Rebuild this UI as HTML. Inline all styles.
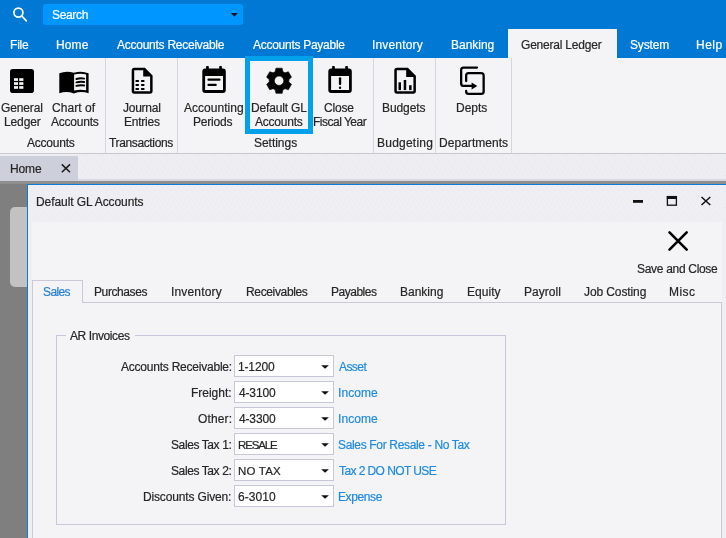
<!DOCTYPE html>
<html><head><meta charset="utf-8"><style>
html,body{margin:0;padding:0;width:726px;height:538px;overflow:hidden;background:#f4f4f6;position:relative;font-family:"Liberation Sans",sans-serif}
.a{position:absolute;box-sizing:border-box}
.t{position:absolute;white-space:pre;will-change:transform;-webkit-text-stroke:0.2px currentColor;font-size:12px;line-height:30px;height:30px;font-family:"Liberation Sans",sans-serif}
svg{position:absolute;overflow:visible}
</style></head><body>
<!-- header -->
<div class="a" style="left:0;top:0;width:726px;height:58px;background:#0078d4"></div>
<div class="a" style="left:43px;top:4px;width:200px;height:21px;background:#0096ff;border-radius:3px"></div>
<div class="a" style="left:508px;top:29px;width:109px;height:29px;background:#f4f4f6"></div>
<!-- ribbon -->
<div class="a" style="left:0;top:58px;width:726px;height:95px;background:#f4f4f6"></div>
<div class="a" style="left:105px;top:58px;width:1px;height:95px;background:#d6d6e0"></div>
<div class="a" style="left:177px;top:58px;width:1px;height:95px;background:#d6d6e0"></div>
<div class="a" style="left:373px;top:58px;width:1px;height:95px;background:#d6d6e0"></div>
<div class="a" style="left:435px;top:58px;width:1px;height:95px;background:#d6d6e0"></div>
<div class="a" style="left:511px;top:58px;width:1px;height:95px;background:#d6d6e0"></div>
<div class="a" style="left:0;top:153px;width:726px;height:1px;background:#c8c8d2"></div>
<div class="a" style="left:245px;top:56px;width:68px;height:78px;border:5px solid #00a1ea"></div>
<!-- tab strip -->
<div class="a" style="left:0;top:154px;width:726px;height:25px;background:#eeeef2"></div>
<div class="a" style="left:78px;top:179px;width:648px;height:2px;background:#d8d8e4"></div>
<div class="a" style="left:0;top:156px;width:78px;height:25px;background:#cdcfda"></div>
<!-- gray area -->
<div class="a" style="left:0;top:181px;width:726px;height:357px;background:#7f7f7f"></div>
<div class="a" style="left:0;top:181px;width:726px;height:3px;background:#8e8e8e"></div>
<div class="a" style="left:10px;top:207px;width:40px;height:80px;background:#c2c2c2;border-radius:5px"></div>
<!-- window -->
<div class="a" style="left:27px;top:184px;width:700px;height:360px;background:#eeeef3;border-left:1px solid #0a7bd8;border-top:1px solid #0a7bd8"></div>
<!-- dots -->
<svg class="a" style="left:0;top:0" width="726" height="538"><defs><pattern id="dp" width="16" height="16" patternUnits="userSpaceOnUse"><rect x="1.0" y="2.0" width="1" height="1" fill="#c9e0f0"/><rect x="6.0" y="1.0" width="1" height="1" fill="#c9e0f0"/><rect x="11.0" y="3.0" width="1" height="1" fill="#c9e0f0"/><rect x="4.0" y="6.0" width="1" height="1" fill="#c9e0f0"/><rect x="9.0" y="7.0" width="1" height="1" fill="#c9e0f0"/><rect x="14.0" y="6.0" width="1" height="1" fill="#c9e0f0"/><rect x="2.0" y="11.0" width="1" height="1" fill="#c9e0f0"/><rect x="7.0" y="12.0" width="1" height="1" fill="#c9e0f0"/><rect x="12.0" y="10.0" width="1" height="1" fill="#c9e0f0"/><rect x="15.0" y="14.0" width="1" height="1" fill="#c9e0f0"/><rect x="5.0" y="15.0" width="1" height="1" fill="#c9e0f0"/><rect x="10.0" y="14.0" width="1" height="1" fill="#c9e0f0"/></pattern></defs><rect x="78" y="156" width="648" height="22" fill="url(#dp)" opacity="0.45"/><rect x="29" y="186" width="697" height="35" fill="url(#dp)" opacity="0.45"/></svg>
<div class="a" style="left:32px;top:222px;width:690px;height:320px;background:#f4f4f6"></div>
<!-- tabs -->
<div class="a" style="left:32px;top:302px;width:690px;height:240px;border:1px solid #c9c9d8;background:#f4f4f6"></div>
<div class="a" style="left:32px;top:280px;width:51px;height:23px;border:1px solid #c9c9d8;border-bottom:none;background:#f4f4f6"></div>
<!-- group box -->
<div class="a" style="left:56px;top:335px;width:450px;height:190px;border:1px solid #c8c8da"></div>
<div class="a" style="left:66px;top:330px;width:69px;height:10px;background:#f4f4f6"></div>

<!-- combos -->
<div class="a" style="left:234px;top:355px;width:100px;height:22px;border:1px solid #c6c8da;background:#fff"></div>
<div class="a" style="left:234px;top:381px;width:100px;height:22px;border:1px solid #c6c8da;background:#fff"></div>
<div class="a" style="left:234px;top:407px;width:100px;height:22px;border:1px solid #c6c8da;background:#fff"></div>
<div class="a" style="left:234px;top:433px;width:100px;height:22px;border:1px solid #c6c8da;background:#fff"></div>
<div class="a" style="left:234px;top:459px;width:100px;height:22px;border:1px solid #c6c8da;background:#fff"></div>
<div class="a" style="left:234px;top:485px;width:100px;height:22px;border:1px solid #c6c8da;background:#fff"></div>
<svg width="726" height="538" style="left:0;top:0" viewBox="0 0 726 538"><circle cx="18.4" cy="12.6" r="4.5" fill="none" stroke="#fff" stroke-width="1.7"/><path d="M21.8,16 L26.3,20.8" stroke="#fff" stroke-width="1.7" stroke-linecap="round"/><path d="M230.9,13.1 H237.9 L234.4,16.8 Z" fill="#1a1a1a"/><rect x="10" y="69" width="24" height="24" rx="2.8" fill="#000"/><rect x="14" y="78.2" width="4" height="2.7" fill="#f4f4f6"/><rect x="19.2" y="78.2" width="4.2" height="2.7" fill="#f4f4f6"/><rect x="14" y="82.2" width="4" height="2.7" fill="#f4f4f6"/><rect x="19.2" y="82.2" width="4.2" height="2.7" fill="#f4f4f6"/><rect x="14" y="86.1" width="4" height="2.7" fill="#f4f4f6"/><rect x="19.2" y="86.1" width="4.2" height="2.7" fill="#f4f4f6"/><path d="M59.3,73.2 Q66.5,70.3 73.9,72.8 Q81.3,70.3 88.6,73.2 V93.2 Q81.3,90.8 73.9,93.4 Q66.5,90.8 59.3,93.2 Z" fill="#000"/><path d="M74.1,74.6 Q80,73 86.1,74.4 V90.3 Q80,88.9 74.1,90.6 Z" fill="#f4f4f6"/><path d="M76.4,79.0 Q80.3,77.8 84.2,78.6" stroke="#000" stroke-width="1.9" fill="none" stroke-linecap="round"/><path d="M76.4,82.4 Q80.3,81.2 84.2,82.0" stroke="#000" stroke-width="1.9" fill="none" stroke-linecap="round"/><path d="M76.4,85.9 Q80.3,84.7 84.2,85.5" stroke="#000" stroke-width="1.9" fill="none" stroke-linecap="round"/><path d="M134.29999999999998,67.7 H144.9 L152.6,75.4 V91.10000000000001 Q152.6,93.7 150.0,93.7 H134.29999999999998 Q131.7,93.7 131.7,91.10000000000001 V70.3 Q131.7,67.7 134.29999999999998,67.7 Z M134.2,70.2 H143.20000000000002 V76.60000000000001 H150.1 V91.2 H134.2 Z" fill="#000" fill-rule="evenodd"/><rect x="135.4" y="80.1" width="3.7" height="2.0" rx="0.8" fill="#000"/><rect x="140.9" y="80.1" width="3.7" height="2.0" rx="0.8" fill="#000"/><rect x="135.4" y="83.9" width="3.7" height="2.0" rx="0.8" fill="#000"/><rect x="140.9" y="83.9" width="3.7" height="2.0" rx="0.8" fill="#000"/><rect x="135.4" y="88.0" width="3.7" height="2.0" rx="0.8" fill="#000"/><rect x="140.9" y="88.0" width="3.7" height="2.0" rx="0.8" fill="#000"/><path d="M205.3,68.6 H222.8 Q225.8,68.6 225.8,71.6 V90 Q225.8,93 222.8,93 H205.3 Q202.3,93 202.3,90 V71.6 Q202.3,68.6 205.3,68.6 Z M205.1,75.9 V90.1 H223.0 V75.9 Z" fill="#000" fill-rule="evenodd"/><rect x="206.1" y="66.1" width="2.7" height="4" rx="0.6" fill="#000"/><rect x="219.2" y="66.1" width="2.7" height="4" rx="0.6" fill="#000"/><path d="M208.5,79.7 H219.5 M208.5,84.9 H215.7" stroke="#000" stroke-width="2.2" stroke-linecap="round"/><path d="M331.3,68.6 H348.8 Q351.8,68.6 351.8,71.6 V90 Q351.8,93 348.8,93 H331.3 Q328.3,93 328.3,90 V71.6 Q328.3,68.6 331.3,68.6 Z M331.1,75.9 V90.1 H349.0 V75.9 Z" fill="#000" fill-rule="evenodd"/><rect x="332.1" y="66.1" width="2.7" height="4" rx="0.6" fill="#000"/><rect x="345.2" y="66.1" width="2.7" height="4" rx="0.6" fill="#000"/><path d="M340.05,78.3 V84" stroke="#000" stroke-width="2.3" stroke-linecap="round"/><circle cx="340.05" cy="87.8" r="1.2" fill="#000"/><path d="M275.15,71.65 L275.95,68.18 L282.15,68.18 L282.95,71.65 L284.98,72.82 L288.39,71.78 L291.49,77.15 L288.88,79.58 L288.88,81.92 L291.49,84.35 L288.39,89.72 L284.98,88.68 L282.95,89.85 L282.15,93.32 L275.95,93.32 L275.15,89.85 L273.12,88.68 L269.71,89.72 L266.61,84.35 L269.22,81.92 L269.22,79.58 L266.61,77.15 L269.71,71.78 L273.12,72.82 Z M283.75,80.75 A4.7,4.7 0 1 0 274.35,80.75 A4.7,4.7 0 1 0 283.75,80.75 Z" fill="#000" fill-rule="evenodd" stroke="#000" stroke-width="0.6" stroke-linejoin="round"/><path d="M396.90000000000003,67.7 H407.9 L415.9,75.7 V91.10000000000001 Q415.9,93.7 413.29999999999995,93.7 H396.90000000000003 Q394.3,93.7 394.3,91.10000000000001 V70.3 Q394.3,67.7 396.90000000000003,67.7 Z M396.8,70.2 H406.2 V76.9 H413.4 V91.2 H396.8 Z" fill="#000" fill-rule="evenodd"/><rect x="398.5" y="82.3" width="2.5" height="7.8" fill="#000"/><rect x="403.7" y="80" width="2.5" height="10.1" fill="#000"/><rect x="409.1" y="85.2" width="2.5" height="4.9" fill="#000"/><path d="M477,67.55 H463.6 Q461.15,67.55 461.15,70 V83.4 Q461.15,85.9 463.6,85.9 H473" stroke="#000" stroke-width="2.3" fill="none" stroke-linecap="round"/><path d="M471.6,82.6 L477.3,86 L471.6,89.4 Z" fill="#000"/><path d="M466.15,81 V75.6 Q466.15,73.15 468.6,73.15 H481.2 Q483.65,73.15 483.65,75.6 V91.5 Q483.65,93.95 481.2,93.95 H468.6 Q466.15,93.95 466.15,91.5 V91" stroke="#000" stroke-width="2.3" fill="none" stroke-linecap="round"/><path d="M61.8,164.4 L70,172.2 M70,164.4 L61.8,172.2" stroke="#1a1a1a" stroke-width="1.5"/><rect x="633" y="200" width="10" height="2.8" fill="#111"/><rect x="667.4" y="196.6" width="9" height="8.6" fill="none" stroke="#111" stroke-width="1.3"/><rect x="666.8" y="196" width="10.2" height="3" fill="#111"/><path d="M701.5,197 L710.3,205 M710.3,197 L701.5,205" stroke="#111" stroke-width="1.5"/><path d="M669.5,232.4 L686.7,249.6 M686.7,232.4 L669.5,249.6" stroke="#000" stroke-width="2.6" stroke-linecap="round"/><path d="M321.2,365.2 H328.9 L325.05,368.8 Z" fill="#111"/><path d="M321.2,391.2 H328.9 L325.05,394.8 Z" fill="#111"/><path d="M321.2,417.2 H328.9 L325.05,420.8 Z" fill="#111"/><path d="M321.2,443.2 H328.9 L325.05,446.8 Z" fill="#111"/><path d="M321.2,469.2 H328.9 L325.05,472.8 Z" fill="#111"/><path d="M321.2,495.2 H328.9 L325.05,498.8 Z" fill="#111"/></svg>
<div class="t" style="left:52.30px;top:-0.20px;letter-spacing:-0.340px;color:#ffffff">Search</div>
<div class="t" style="left:9.60px;top:29.80px;letter-spacing:-0.200px;color:#ffffff">File</div>
<div class="t" style="left:56.20px;top:29.80px;letter-spacing:0.133px;color:#ffffff">Home</div>
<div class="t" style="left:117.40px;top:29.80px;letter-spacing:-0.256px;color:#ffffff">Accounts Receivable</div>
<div class="t" style="left:253.20px;top:29.80px;letter-spacing:-0.273px;color:#ffffff">Accounts Payable</div>
<div class="t" style="left:372.20px;top:29.80px;letter-spacing:0.163px;color:#ffffff">Inventory</div>
<div class="t" style="left:450.60px;top:29.80px;letter-spacing:-0.017px;color:#ffffff">Banking</div>
<div class="t" style="left:521.40px;top:29.80px;letter-spacing:-0.208px;color:#262626">General Ledger</div>
<div class="t" style="left:629.80px;top:29.80px;letter-spacing:-0.160px;color:#ffffff">System</div>
<div class="t" style="left:695.90px;top:29.80px;letter-spacing:0.467px;color:#ffffff">Help</div>
<div class="t" style="left:1.20px;top:93.00px;letter-spacing:-0.133px;color:#262626">General</div>
<div class="t" style="left:3.60px;top:106.50px;letter-spacing:-0.120px;color:#262626">Ledger</div>
<div class="t" style="left:52.30px;top:93.00px;letter-spacing:0.057px;color:#262626">Chart of</div>
<div class="t" style="left:50.50px;top:106.50px;letter-spacing:-0.214px;color:#262626">Accounts</div>
<div class="t" style="left:26.60px;top:127.80px;letter-spacing:-0.229px;color:#262626">Accounts</div>
<div class="t" style="left:123.00px;top:93.00px;letter-spacing:-0.250px;color:#262626">Journal</div>
<div class="t" style="left:124.40px;top:106.50px;letter-spacing:-0.233px;color:#262626">Entries</div>
<div class="t" style="left:109.30px;top:127.80px;letter-spacing:-0.364px;color:#262626">Transactions</div>
<div class="t" style="left:184.30px;top:93.00px;letter-spacing:0.033px;color:#262626">Accounting</div>
<div class="t" style="left:193.40px;top:106.50px;letter-spacing:-0.200px;color:#262626">Periods</div>
<div class="t" style="left:251.00px;top:93.00px;letter-spacing:-0.167px;color:#262626">Default GL</div>
<div class="t" style="left:254.50px;top:106.80px;letter-spacing:-0.214px;color:#262626">Accounts</div>
<div class="t" style="left:324.20px;top:93.00px;letter-spacing:-0.200px;color:#262626">Close</div>
<div class="t" style="left:312.90px;top:106.80px;letter-spacing:-0.500px;color:#262626">Fiscal Year</div>
<div class="t" style="left:253.50px;top:127.80px;letter-spacing:-0.029px;color:#262626">Settings</div>
<div class="t" style="left:382.40px;top:93.00px;letter-spacing:-0.100px;color:#262626">Budgets</div>
<div class="t" style="left:456.40px;top:93.00px;letter-spacing:0.000px;color:#262626">Depts</div>
<div class="t" style="left:376.60px;top:127.60px;letter-spacing:0.225px;color:#262626">Budgeting</div>
<div class="t" style="left:438.60px;top:127.60px;letter-spacing:0.040px;color:#262626">Departments</div>
<div class="t" style="left:9.70px;top:153.70px;letter-spacing:-0.133px;color:#262626">Home</div>
<div class="t" style="left:35.60px;top:187.00px;letter-spacing:-0.078px;color:#262626">Default GL Accounts</div>
<div class="t" style="left:637.00px;top:254.20px;letter-spacing:-0.308px;color:#262626">Save and Close</div>
<div class="t" style="left:42.80px;top:277.00px;letter-spacing:-0.600px;color:#2680d4">Sales</div>
<div class="t" style="left:94.30px;top:277.00px;letter-spacing:-0.400px;color:#262626">Purchases</div>
<div class="t" style="left:171.00px;top:277.00px;letter-spacing:0.163px;color:#262626">Inventory</div>
<div class="t" style="left:245.60px;top:277.00px;letter-spacing:-0.350px;color:#262626">Receivables</div>
<div class="t" style="left:330.60px;top:277.00px;letter-spacing:-0.486px;color:#262626">Payables</div>
<div class="t" style="left:400.30px;top:277.00px;letter-spacing:0.000px;color:#262626">Banking</div>
<div class="t" style="left:467.10px;top:277.00px;letter-spacing:0.040px;color:#262626">Equity</div>
<div class="t" style="left:524.00px;top:277.00px;letter-spacing:0.050px;color:#262626">Payroll</div>
<div class="t" style="left:584.00px;top:277.00px;letter-spacing:-0.100px;color:#262626">Job Costing</div>
<div class="t" style="left:668.80px;top:277.00px;letter-spacing:0.467px;color:#262626">Misc</div>
<div class="t" style="left:70.40px;top:321.00px;letter-spacing:-0.410px;color:#262626">AR Invoices</div>
<div class="t" style="left:120.70px;top:351.80px;letter-spacing:-0.226px;color:#262626">Accounts Receivable:</div>
<div class="t" style="left:238.40px;top:351.80px;letter-spacing:-0.150px;color:#262626">1-1200</div>
<div class="t" style="left:339.20px;top:351.80px;letter-spacing:-0.575px;color:#1f8ae0">Asset</div>
<div class="t" style="left:190.50px;top:377.80px;letter-spacing:-0.014px;color:#262626">Freight:</div>
<div class="t" style="left:239.40px;top:377.80px;letter-spacing:-0.150px;color:#262626">4-3100</div>
<div class="t" style="left:338.20px;top:377.80px;letter-spacing:0.060px;color:#1f8ae0">Income</div>
<div class="t" style="left:197.70px;top:403.80px;letter-spacing:0.140px;color:#262626">Other:</div>
<div class="t" style="left:239.40px;top:403.80px;letter-spacing:-0.150px;color:#262626">4-3300</div>
<div class="t" style="left:338.20px;top:403.80px;letter-spacing:0.060px;color:#1f8ae0">Income</div>
<div class="t" style="left:170.80px;top:429.80px;letter-spacing:-0.400px;color:#262626">Sales Tax 1:</div>
<div class="t" style="left:238.40px;top:429.80px;font-size:11.5px;letter-spacing:-1.140px;color:#262626">RESALE</div>
<div class="t" style="left:338.20px;top:429.80px;letter-spacing:-0.333px;color:#1f8ae0">Sales For Resale - No Tax</div>
<div class="t" style="left:170.80px;top:455.80px;letter-spacing:-0.400px;color:#262626">Sales Tax 2:</div>
<div class="t" style="left:238.40px;top:455.80px;font-size:11.5px;letter-spacing:0.180px;color:#262626">NO TAX</div>
<div class="t" style="left:339.20px;top:455.80px;letter-spacing:-0.580px;color:#1f8ae0">Tax 2 DO NOT USE</div>
<div class="t" style="left:142.70px;top:481.80px;letter-spacing:-0.153px;color:#262626">Discounts Given:</div>
<div class="t" style="left:238.40px;top:481.80px;letter-spacing:0.080px;color:#262626">6-3010</div>
<div class="t" style="left:338.20px;top:481.80px;letter-spacing:-0.400px;color:#1f8ae0">Expense</div>
</body></html>
